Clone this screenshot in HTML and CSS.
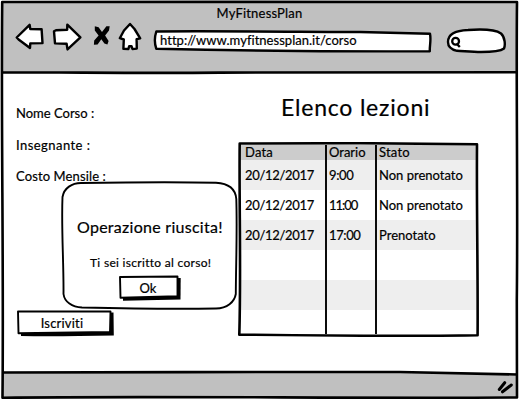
FILE: index.html
```html
<!DOCTYPE html>
<html lang="it">
<head>
<meta charset="utf-8">
<title>MyFitnessPlan</title>
<link rel="stylesheet" href="styles.css">
</head>
<body>
<div class="window">
  <header class="chrome">
    <div class="window-title"><span class="t-title">MyFitnessPlan</span></div>
    <div class="toolbar">
      <svg class="nav" width="130" height="32" viewBox="12 20 130 32">
        <path class="shape" d="M16.7 37.5L29.6 24.8L30.3 29L41.6 29.2L42.5 43.1L30.3 43.4L30 48L18.6 39.5Z"/>
        <path class="shape" d="M54 31.3L56 30.2L67.2 29.8L67.3 24.7L80.4 37.4L67.5 49.4L66.6 43.7L55 43.4Z"/>
        <path class="cross" d="M94.8 26.3L98.6 27.2L102 32L106.4 26.2L109.7 26.3L109 30.5L105.1 35.6L108.6 41L107.4 44.6L104.4 43.6L101.3 39.2L97.6 44.6L93.9 44.8L94.2 40.6L98.6 35.6L94.8 30.6Z"/>
        <path class="shape" d="M130 24L134.5 29L140.2 38.3L136.6 39.2L136.8 48.6L132.4 49L131.5 46.2L129.2 46.2L128.4 49L123.4 48.8L123.8 39.5L119.8 38.2L124 30.5Z"/>
      </svg>
      <div class="address">
        <svg class="outline" viewBox="153 29 280 26"><path class="shape" d="M156.3 31.5C200 30.8 300 31.8 360 32L430 33.8C431.3 40 429.5 46 429.8 51.3C350 51.6 240 50.7 156.3 48.8C154.3 43 154.5 37 156.3 31.5Z"/></svg>
        <span class="t-url">http://www.myfitnessplan.it/corso</span>
      </div>
      <svg class="search" width="62" height="28" viewBox="446 27 62 28">
        <path class="shape" d="M448 42C448 34 455 30.5 468 30C482 29 496 30 501 33.5C505 37 505.5 45 504 48.5C500 51.5 490 52 481 52C472 52 463 51 457 50.8C451 49.5 448 46 448 42Z"/>
        <circle class="lens" cx="455.6" cy="41.2" r="3.4"/><path class="lens" d="M456.6 43.6L459.8 47"/>
      </svg>
    </div>
  </header>
  <main class="page">
    <section class="course">
      <div class="field f1">Nome Corso :</div>
      <div class="field f2">Insegnante :</div>
      <div class="field f3">Costo Mensile :</div>
      <button class="btn enroll">
        <svg class="outline" viewBox="16 309 98 28"><path class="shadow" d="M21 314L113.5 312.5L113.8 335.5C80 336 50 336.5 21 336Z"/><path class="box" d="M18 311.5L110.5 311.5L110 332L18.5 333.3Z"/></svg>
        <span class="t-enroll">Iscriviti</span>
      </button>
    </section>
    <section class="lessons">
      <h1>Elenco lezioni</h1>
      <div class="table">
        <div class="row head"><span class="c-data">Data</span><span class="c-orario">Orario</span><span class="c-stato">Stato</span></div>
        <div class="row odd"><span class="date">20/12/2017</span><span class="hour">9:00</span><span class="state">Non prenotato</span></div>
        <div class="row"><span class="date">20/12/2017</span><span class="hour tight">11:00</span><span class="state">Non prenotato</span></div>
        <div class="row odd"><span class="date">20/12/2017</span><span class="hour">17:00</span><span class="state">Prenotato</span></div>
        <div class="row"></div>
        <div class="row odd"></div>
        <div class="row last"></div>
        <svg class="outline" viewBox="238 142 242 195"><path class="rule" d="M326 145V334M376 145V334"/><path class="edge" d="M239.7 143.5L360 143.2L477 144.2C476.5 210 478 270 477.6 335.2C390 336.6 320 335.6 239.3 334.6C241.2 270 239 200 239.7 143.5Z"/></svg>
      </div>
    </section>
    <div class="dialog">
      <svg class="outline" viewBox="60 180 180 131"><path class="box" d="M81 183C130 182.2 180 181.8 216 182.8C228 183.5 235.5 189 236.3 199C237.3 230 236 262 235.8 294C234.5 302 227 308.5 216 308.5C175 309.2 125 308.5 82 307.5C72 307 64.5 302 63.5 294C63.8 262 61.2 228 62.5 197C64 188 72 183 81 183Z"/></svg>
      <p class="dialog-title">Operazione riuscita!</p>
      <p class="dialog-text">Ti sei iscritto al corso!</p>
      <button class="btn ok">
        <svg class="outline" viewBox="118 275 64 27"><path class="shadow" d="M123 280L180.7 279L180.5 300.5L123 301.8Z"/><path class="box" d="M120 278L177.5 277.5L177.5 297.2L120.5 298.7Z"/></svg>
        <span class="t-ok">Ok</span>
      </button>
    </div>
  </main>
  <footer class="status"></footer>
  <svg class="frame" viewBox="0 0 519 400">
    <path class="status-fill" d="M3 372.5C140 372.5 260 371.5 400 372L517 374.5V397H3Z"/>
    <path class="edge" d="M2.2 2C170 2.2 360 1.2 517 2C516 90 518 200 516.8 300L517 397.5C350 398.6 160 395.8 2.5 397.7C3.8 260 1 130 2.2 2ZM3 72.3C80 72.3 140 73.4 220 72.6C320 71.8 420 72.3 517 72.3M3 372.5C140 372.5 260 371.5 400 372L517 374.5"/>
    <path class="grip" d="M499.3 389.5L504.7 382.7M502.5 391.8L511.3 385"/>
  </svg>
</div>
</body>
</html>
```

FILE: styles.css
```css
* { box-sizing: border-box; }
body { margin: 0; background: #fff; color: #000; font: 13px/16px Lato, "Noto Sans", sans-serif; font-variant-ligatures: none; -webkit-text-stroke: 0.2px #000; }
h1, p { margin: 0; font-weight: 400; }
span, .field, h1, p { white-space: nowrap; }
.window { position: relative; width: 519px; height: 400px; display: flex; flex-direction: column; overflow: hidden; padding: 2px; }
.chrome { height: 71px; background: #c0c0c0; padding-top: 3px; }
.window-title { text-align: center; height: 15px; letter-spacing: 0.2px; }
.toolbar { display: flex; align-items: flex-start; padding-left: 10px; }
.nav { display: block; }
.address { position: relative; width: 280px; height: 26px; margin: 9px 0 0 11px; padding: 3px 0 0 7px; letter-spacing: 0.03px; }
.address span { position: relative; }
.search { display: block; margin: 7px 0 0 13px; }
.outline { position: absolute; inset: 0; width: 100%; height: 100%; }
.shape, .box { fill: #fff; stroke: #000; stroke-linejoin: round; }
.shape { stroke-width: 2.4; }
.box { stroke-width: 1.9; }
.shadow { fill: #000; }
.cross { fill: #000; }
.lens { fill: none; stroke: #000; stroke-width: 2.3; }
.edge { fill: none; stroke: #000; stroke-width: 2.6; stroke-linejoin: round; }
.rule { fill: none; stroke: #000; stroke-width: 1.9; }
.page { position: relative; flex: 1; display: flex; }
.course { width: 236px; padding: 32px 0 0 14px; display: flex; flex-direction: column; align-items: flex-start; }
.f2 { margin-top: 16px; letter-spacing: 0.45px; }
.f3 { margin-top: 15px; letter-spacing: 0.12px; }
.btn { position: relative; border: 0; padding: 0; background: none; font: inherit; color: #000; text-align: center; }
.btn span { position: relative; }
.enroll { width: 98px; height: 28px; margin-top: 125px; padding-right: 6px; letter-spacing: 0.2px; }
.lessons { width: 242px; padding-top: 18px; }
h1 { font-size: 23px; line-height: 32px; padding-left: 43px; letter-spacing: 0.8px; }
.table { position: relative; height: 195px; margin-top: 19px; padding: 3px 2px 0 2px; }
.row { display: grid; grid-template-columns: 84px 50px 1fr; height: 30px; line-height: 30px; padding-left: 5px; background: #fff; }
.head { height: 15px; line-height: 15px; background: #ccc; }
.c-data, .c-stato { letter-spacing: 0.2px; }
.date { letter-spacing: -0.3px; }
.hour { letter-spacing: -0.4px; }
.hour.tight { letter-spacing: -1px; }
.odd { background: #eee; }
.last { height: 25px; }
.dialog { position: absolute; left: 58px; top: 107px; width: 180px; height: 131px; text-align: center; padding: 37px 1px 0 0; }
.dialog p { position: relative; text-align: left; }
.dialog-title { font-size: 16px; line-height: 20px; margin-bottom: 18px; padding-left: 17px; letter-spacing: 0.27px; }
.dialog-text { font-size: 12px; padding-left: 30px; letter-spacing: 0.3px; }
.ok { width: 64px; height: 27px; margin-top: 3px; padding-right: 3px; }
.status { height: 25px; }
.frame { position: absolute; inset: 0; width: 519px; height: 400px; pointer-events: none; }
.status-fill { fill: #c0c0c0; }
.grip { fill: none; stroke: #000; stroke-width: 3; stroke-linecap: round; }
```
